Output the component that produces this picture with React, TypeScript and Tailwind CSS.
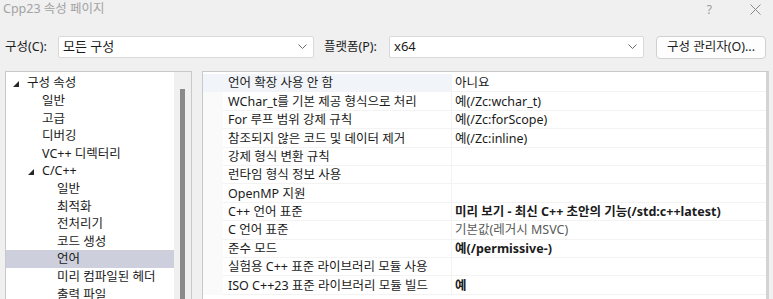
import React from 'react';

const tree = [
  { label: '구성 속성', level: 0, open: true },
  { label: '일반', level: 1 },
  { label: '고급', level: 1 },
  { label: '디버깅', level: 1 },
  { label: 'VC++ 디렉터리', level: 1 },
  { label: 'C/C++', level: 1, open: true },
  { label: '일반', level: 2 },
  { label: '최적화', level: 2 },
  { label: '전처리기', level: 2 },
  { label: '코드 생성', level: 2 },
  { label: '언어', level: 2, selected: true },
  { label: '미리 컴파일된 헤더', level: 2 },
  { label: '출력 파일', level: 2 },
];

const props = [
  { name: '언어 확장 사용 안 함', value: '아니요' },
  { name: 'WChar_t를 기본 제공 형식으로 처리', value: '예(/Zc:wchar_t)' },
  { name: 'For 루프 범위 강제 규칙', value: '예(/Zc:forScope)' },
  { name: '참조되지 않은 코드 및 데이터 제거', value: '예(/Zc:inline)' },
  { name: '강제 형식 변환 규칙', value: '' },
  { name: '런타임 형식 정보 사용', value: '' },
  { name: 'OpenMP 지원', value: '' },
  { name: 'C++ 언어 표준', value: '미리 보기 - 최신 C++ 초안의 기능(/std:c++latest)', bold: true },
  { name: 'C 언어 표준', value: '기본값(레거시 MSVC)', muted: true },
  { name: '준수 모드', value: '예(/permissive-)', bold: true },
  { name: '실험용 C++ 표준 라이브러리 모듈 사용', value: '' },
  { name: 'ISO C++23 표준 라이브러리 모듈 빌드', value: '예', bold: true },
];

const Chevron = () => (
  <svg width="9" height="6" viewBox="0 0 9 6" className="shrink-0">
    <polyline points="0.5,0.5 4.5,4.5 8.5,0.5" fill="none" stroke="#6a6a6a" strokeWidth="1" />
  </svg>
);

const Expander = () => (
  <svg width="6" height="6" viewBox="0 0 6 6" className="shrink-0">
    <polygon points="6,0 6,6 0,6" fill="#262626" />
  </svg>
);

const Combo = ({ value, width }: { value: string; width: string }) => (
  <div className={`${width} h-[22px] bg-white border border-[#d9d9d9] rounded-[2px] flex items-center justify-between pl-[4px] pr-[6px]`}>
    <span className="text-[13px] text-[#1a1a1a]">{value}</span>
    <Chevron />
  </div>
);

export default function App() {
  return (
    <div
      className="w-[773px] h-[299px] bg-[#f0f0f0] overflow-hidden text-[#1b1b1b]"
      style={{ fontFamily: '"Noto Sans", "Noto Sans CJK KR", sans-serif' }}
    >
      {/* title bar */}
      <div className="h-[19px] flex items-center justify-between pl-[3px] pr-[12px]">
        <span className="text-[12.5px] text-[#a3a3a3]">Cpp23 속성 페이지</span>
        <div className="flex items-center gap-[38px] text-[#9a9a9a]">
          <span className="text-[12px]">?</span>
          <svg width="11" height="11" viewBox="0 0 11 11">
            <path d="M0.5 0.5L10.5 10.5M10.5 0.5L0.5 10.5" stroke="#8a8a8a" strokeWidth="1" />
          </svg>
        </div>
      </div>

      {/* config row */}
      <div className="mt-[17px] h-[22px] flex items-center pl-[5px]">
        <span className="w-[53px] text-[12.5px]">구성(C):</span>
        <Combo value="모든 구성" width="w-[256px]" />
        <span className="ml-[10px] w-[65px] text-[12.5px]">플랫폼(P):</span>
        <Combo value="x64" width="w-[255px]" />
        <div className="ml-[12px] w-[110px] h-[23px] bg-[#fdfdfd] border border-[#d0d0d0] rounded-[4px] flex items-center justify-center text-[12.5px]">
          구성 관리자(O)...
        </div>
      </div>

      {/* panels */}
      <div className="mt-[13px] flex pl-[5px]">
        {/* tree */}
        <div className="w-[187px] h-[230px] bg-white border border-[#c9c9c9] flex">
          <div className="flex-1 pt-[2px]">
            {tree.map((t, i) => (
              <div
                key={i}
                className={`h-[17.6px] flex items-center pt-[2px] text-[12.5px] ${t.selected ? 'bg-[#cdd0dc]' : ''}`}
                style={{ paddingLeft: 7 + t.level * 15 }}
              >
                <span className="w-[14px] flex items-center">{t.open ? <Expander /> : null}</span>
                <span>{t.label}</span>
              </div>
            ))}
          </div>
          <div className="w-[17px] bg-[#f0f0f0] flex justify-center pt-[17px]">
            <div className="w-[5px] h-[220px] bg-[#8a8a8a]" />
          </div>
        </div>

        {/* property grid */}
        <div className="ml-[10px] w-[567px] h-[230px] bg-white border border-[#c9c9c9] border-r-[3px] border-r-[#d4d4d4] pt-[2px]">
          {props.map((p, i) => (
            <div key={i} className="h-[18.4px] flex text-[12.5px]">
              <div className={`w-[20px] ${i === 0 ? 'bg-[#f1f4f8]' : 'bg-[#fafafa]'}`} />
              <div
                className={`w-[228px] pl-[5px] pt-[2px] flex items-center border-b border-[#f3f3f3] ${i === 0 ? 'bg-[#f1f4f8]' : ''}`}
              >
                {p.name}
              </div>
              <div
                className={`flex-1 pl-[3px] pt-[2px] flex items-center border-b border-l border-[#f3f3f3] ${p.bold ? 'font-bold' : ''} ${p.muted ? 'text-[#5a5a5a]' : ''}`}
              >
                {p.value}
              </div>
            </div>
          ))}
        </div>
      </div>
    </div>
  );
}
